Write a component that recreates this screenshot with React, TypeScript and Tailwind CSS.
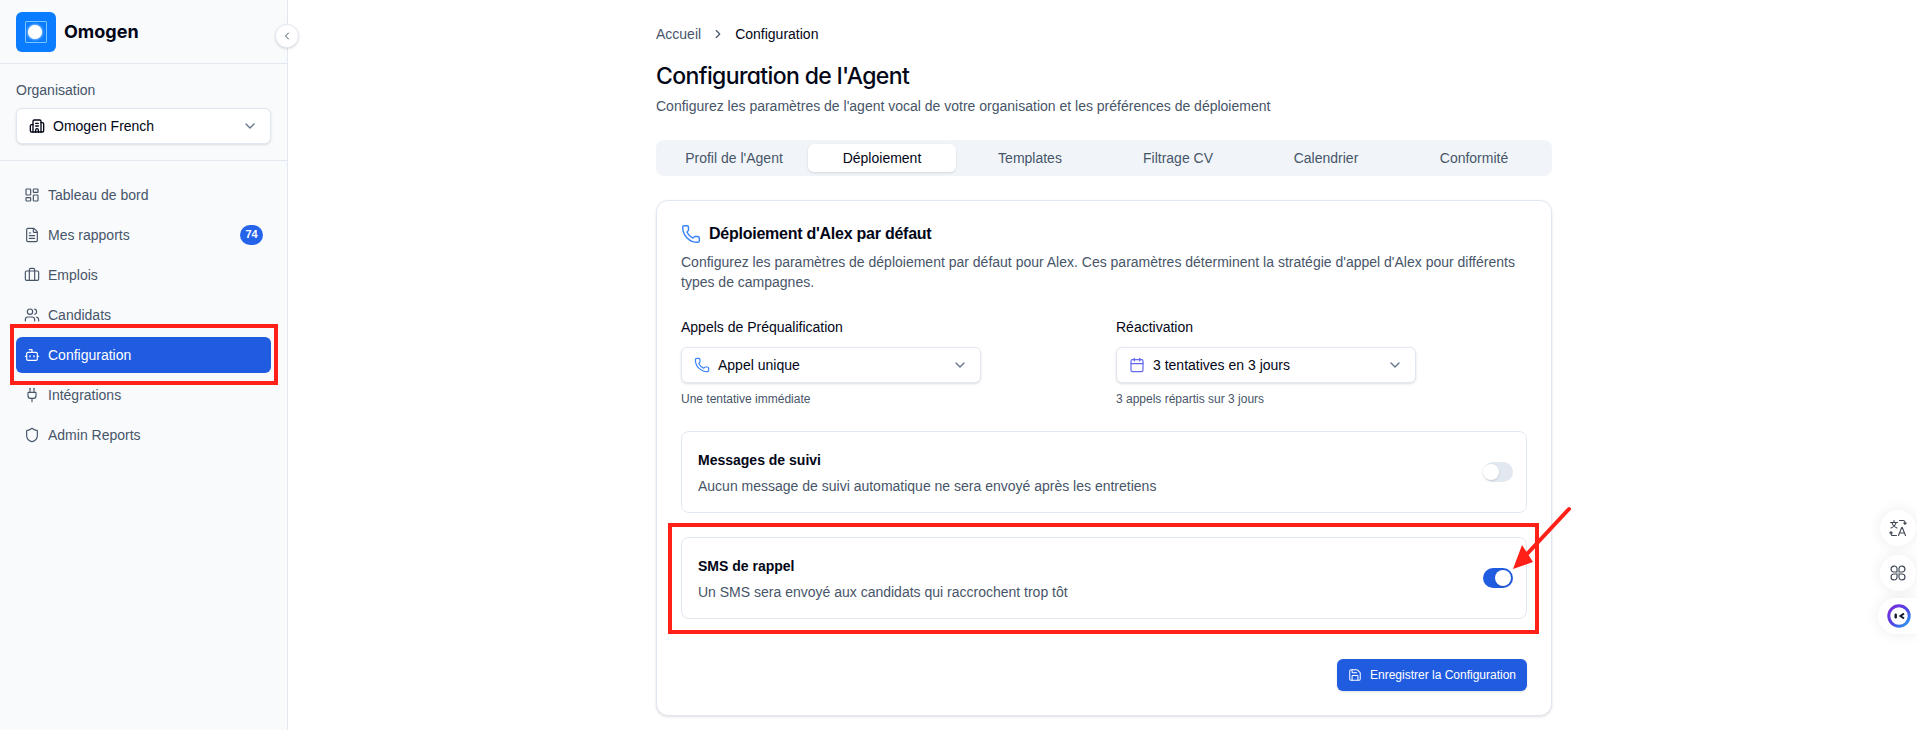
import {
  Bot,
  Briefcase,
  Building2,
  Calendar,
  ChevronDown,
  ChevronLeft,
  ChevronRight,
  FileText,
  LayoutDashboard,
  Phone,
  Plug,
  Save,
  Shield,
  Users,
} from "lucide-react";
import type { ComponentType, ReactNode } from "react";

type NavItem = {
  label: string;
  icon: ComponentType<{ className?: string; strokeWidth?: number }>;
  badge?: string;
  active?: boolean;
};

const navItems: NavItem[] = [
  { label: "Tableau de bord", icon: LayoutDashboard },
  { label: "Mes rapports", icon: FileText, badge: "74" },
  { label: "Emplois", icon: Briefcase },
  { label: "Candidats", icon: Users },
  { label: "Configuration", icon: Bot, active: true },
  { label: "Intégrations", icon: Plug },
  { label: "Admin Reports", icon: Shield },
];

const tabs = ["Profil de l'Agent", "Déploiement", "Templates", "Filtrage CV", "Calendrier", "Conformité"];

function Sidebar() {
  return (
    <aside className="relative w-[288px] shrink-0 bg-[#f8fafc] border-r border-[#e2e8f0]">
      <div className="h-[64px] flex items-center gap-[8px] pl-4 border-b border-[#e2e8f0]">
        <div className="w-10 h-10 rounded-[6px] bg-[#0a7cff] flex items-center justify-center">
          <div className="w-[22px] h-[22px] border border-[#7cc4ff] flex items-center justify-center rounded-[1px]">
            <div className="w-[14px] h-[14px] -translate-x-px rounded-full bg-white shadow-[0_0_3px_#fff]" />
          </div>
        </div>
        <span className="text-[18px] font-bold text-[#020617] font-['Inter',sans-serif]">Omogen</span>
      </div>

      <button className="absolute left-[275px] top-[24px] w-6 h-6 rounded-full bg-white border border-[#e2e8f0] shadow-sm flex items-center justify-center">
        <ChevronLeft className="w-3 h-3 text-[#475569]" />
      </button>

      <div className="h-[97px] px-4 pt-[16px] border-b border-[#e2e8f0]">
        <div className="text-sm leading-5 text-[#475569] mb-[8px]">Organisation</div>
        <div className="w-[255px] h-9 bg-white border border-[#e2e8f0] rounded-[6px] shadow-sm flex items-center px-3">
          <Building2 className="w-4 h-4 text-[#020617]" />
          <span className="ml-2 text-sm text-[#020617]">Omogen French</span>
          <ChevronDown className="w-4 h-4 ml-auto text-[#64748b]" />
        </div>
      </div>

      <nav className="flex flex-col gap-1 pt-4 pl-4 pr-[16px]">
        {navItems.map((item) => {
          const Icon = item.icon;
          return (
            <div
              key={item.label}
              className={
                item.active
                  ? "h-9 rounded-[6px] bg-[#1f5ce0] text-white flex items-center gap-2 px-2 text-sm font-medium"
                  : "h-9 rounded-[6px] text-[#475569] flex items-center gap-2 px-2 text-sm"
              }
            >
              <Icon className="w-4 h-4" strokeWidth={1.75} />
              <span>{item.label}</span>
              {item.badge && (
                <span className="ml-auto h-5 w-[23px] rounded-full bg-[#2563eb] text-white text-[11px] font-semibold flex items-center justify-center">
                  {item.badge}
                </span>
              )}
            </div>
          );
        })}
      </nav>
    </aside>
  );
}

function SelectBox({ icon, text, hint }: { icon: ReactNode; text: string; hint: string }) {
  return (
    <div>
      <div className="w-[300px] h-9 bg-white border border-[#e2e8f0] rounded-[6px] shadow-sm flex items-center pl-3 pr-3">
        {icon}
        <span className="ml-2 text-sm text-[#020617]">{text}</span>
        <ChevronDown className="w-4 h-4 ml-auto text-[#64748b]" />
      </div>
      <p className="mt-[8px] text-xs leading-4 text-[#475569]">{hint}</p>
    </div>
  );
}

function ToggleRow({ title, text, on }: { title: string; text: string; on?: boolean }) {
  return (
    <div className="h-[82px] border border-[#e2e8f0] rounded-lg flex items-center justify-between pl-4 pr-[13px]">
      <div className="pt-[1px]">
        <div className="text-sm leading-5 font-semibold text-[#020617]">{title}</div>
        <div className="mt-[6px] text-sm leading-5 text-[#475569]">{text}</div>
      </div>
      <div
        className={
          on
            ? "w-[30px] h-5 rounded-full bg-[#1f5ce0] flex items-center justify-end pr-[2px]"
            : "w-[30px] h-5 rounded-full bg-[#e2e8f0] flex items-center pl-[0px]"
        }
      >
        <div className="w-4 h-4 rounded-full bg-white shadow-sm" />
      </div>
    </div>
  );
}

function Main() {
  return (
    <main className="flex-1 pl-[3px]">
      <div className="w-[896px] mx-auto pt-[24px]">
        <div className="h-5 flex items-center text-sm text-[#475569]">
          <span>Accueil</span>
          <ChevronRight className="w-[14px] h-[14px] mx-[10px]" />
          <span className="text-[#020617]">Configuration</span>
        </div>

        <h1 className="mt-[16px] text-[23px] tracking-[-0.62px] leading-8 font-medium text-[#020617] font-['Inter',sans-serif] [font-feature-settings:'cv11']">
          Configuration de l'Agent
        </h1>
        <p className="mt-[4px] text-sm leading-5 text-[#475569]">
          Configurez les paramètres de l'agent vocal de votre organisation et les préférences de déploiement
        </p>

        <div className="mt-[24px] h-9 p-1 rounded-lg bg-[#f1f5f9] grid grid-cols-6">
          {tabs.map((tab) => (
            <div
              key={tab}
              className={
                tab === "Déploiement"
                  ? "rounded-[6px] bg-white shadow-sm text-[#020617] text-sm flex items-center justify-center"
                  : "text-[#475569] text-sm flex items-center justify-center"
              }
            >
              {tab}
            </div>
          ))}
        </div>

        <section className="mt-[24px] h-[516px] bg-white border border-[#e2e8f0] rounded-xl shadow-sm p-6">
          <div className="flex items-center gap-2 mt-[-3px] h-6">
            <Phone className="w-5 h-5 text-[#3b82f6]" strokeWidth={1.75} />
            <h2 className="text-base tracking-[-0.25px] font-semibold text-[#020617]">Déploiement d'Alex par défaut</h2>
          </div>
          <p className="mt-[6px] text-sm leading-5 text-[#475569]">
            Configurez les paramètres de déploiement par défaut pour Alex. Ces paramètres déterminent la stratégie
            d'appel d'Alex pour différents types de campagnes.
          </p>

          <div className="mt-[25px] grid grid-cols-2 gap-6">
            <div>
              <div className="mb-[10px] text-sm leading-5 text-[#020617]">Appels de Préqualification</div>
              <SelectBox
                icon={<Phone className="w-4 h-4 text-[#3b82f6]" strokeWidth={1.75} />}
                text="Appel unique"
                hint="Une tentative immédiate"
              />
            </div>
            <div>
              <div className="mb-[10px] text-sm leading-5 text-[#020617]">Réactivation</div>
              <SelectBox
                icon={<Calendar className="w-4 h-4 text-[#6366f1]" strokeWidth={1.75} />}
                text="3 tentatives en 3 jours"
                hint="3 appels répartis sur 3 jours"
              />
            </div>
          </div>

          <div className="mt-[24px] flex flex-col gap-6">
            <ToggleRow
              title="Messages de suivi"
              text="Aucun message de suivi automatique ne sera envoyé après les entretiens"
            />
            <ToggleRow title="SMS de rappel" text="Un SMS sera envoyé aux candidats qui raccrochent trop tôt" on />
          </div>

          <div className="mt-[40px] flex justify-end">
            <button className="h-8 w-[190px] rounded-[6px] bg-[#1f5ce0] text-white text-xs shadow-sm flex items-center justify-center gap-2">
              <Save className="w-[14px] h-[14px]" strokeWidth={1.75} />
              Enregistrer la Configuration
            </button>
          </div>
        </section>
      </div>
    </main>
  );
}

// annotations painted over the capture + floating widget on the right
function Overlays() {
  return (
    <>
      <div className="absolute left-[10px] top-[324px] w-[268px] h-[61px] border-4 border-[#ff2018]" />
      <div className="absolute left-[668px] top-[523px] w-[871px] h-[111px] border-4 border-[#ff2018]" />
      <svg className="absolute left-[1500px] top-[500px]" width="80" height="80" viewBox="0 0 80 80">
        <path d="M69 9 L27 54" stroke="#ff2018" strokeWidth="4" strokeLinecap="round" fill="none" />
        <path d="M13 69 L33 62 L22 45 Z" fill="#ff2018" />
      </svg>

      <div className="absolute left-[1880px] top-[510px] w-9 h-9 rounded-full bg-white shadow-[0_0_14px_rgba(0,0,0,0.08)] flex items-center justify-center">
        {/* translate widget icon */}
        <svg width="18" height="18" viewBox="0 0 18 18" fill="none" stroke="#3f4654" strokeWidth="1.1" strokeLinecap="round">
          <path d="M1.5 3.5h7M5 1.5v2M7 3.5C6.5 6 4.5 8 2 9M3 3.5C3.5 6 5.5 8 8 9" />
          <path d="M10.5 1.5h3.5a2 2 0 0 1 2 2v1.5M14.8 4l1.2 1.2 1.2-1.2" />
          <path d="M7.5 16.5H4a2 2 0 0 1-2-2V13M3.2 14 2 12.8.8 14" />
          <path d="M9.5 16.5 12.7 8.5h.6l3.2 8M10.6 14h4.8" />
        </svg>
      </div>
      <div className="absolute left-[1880px] top-[555px] w-9 h-9 rounded-full bg-white shadow-[0_0_14px_rgba(0,0,0,0.08)] flex items-center justify-center">
        <svg width="18" height="18" viewBox="0 0 18 18" fill="none" stroke="#3f4654" strokeWidth="1.15">
          <path d="M8 8H4.5A3 3 0 1 1 8 4.5Z" />
          <path d="M10 8h3.5A3 3 0 1 0 10 4.5Z" />
          <path d="M8 10H4.5A3 3 0 1 0 8 13.5Z" />
          <path d="M10 10h3.5A3 3 0 1 1 10 13.5Z" />
        </svg>
      </div>
      <div className="absolute left-[1878px] top-[598px] w-[39px] h-[36px] rounded-l-full bg-white shadow-[0_0_14px_rgba(0,0,0,0.08)] flex items-center pl-[9px]">
        <svg width="24" height="24" viewBox="0 0 24 24">
          <defs>
            <linearGradient id="ring" x1="0" y1="0" x2="1" y2="1">
              <stop offset="0" stopColor="#7c2bd9" />
              <stop offset="0.55" stopColor="#4f46e5" />
              <stop offset="1" stopColor="#22a7f0" />
            </linearGradient>
          </defs>
          <circle cx="12" cy="12" r="10.2" fill="#fff" stroke="url(#ring)" strokeWidth="3" />
          <rect x="7.5" y="9.5" width="2.4" height="5" rx="1.2" fill="#111827" />
          <path d="M17 9.5 L13.5 12 L17 14.5" fill="none" stroke="#111827" strokeWidth="2" />
        </svg>
      </div>
    </>
  );
}

export default function App() {
  return (
    <div className="relative flex h-[730px] overflow-hidden bg-white font-['Liberation_Sans',Arial,sans-serif]">
      <Sidebar />
      <Main />
      <Overlays />
    </div>
  );
}
